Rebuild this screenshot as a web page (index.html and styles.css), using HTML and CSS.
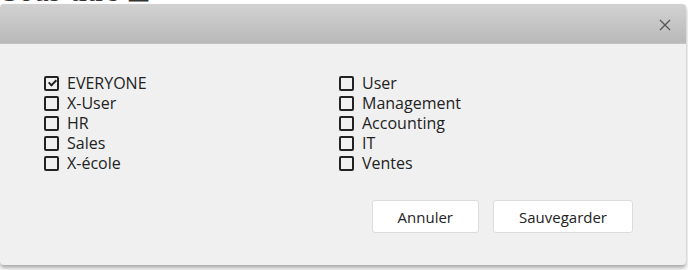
FILE: index.html
```html
<!DOCTYPE html>
<html lang="fr">
<head>
    <meta charset="UTF-8">
    <title>Groupes</title>
    <link rel="stylesheet" href="styles.css">
</head>
<body>
    <div class="page-title">Sous-titre &#x229E;</div>

    <div class="dialog">
        <div class="dialog-header">
            <button class="close-btn" aria-label="Fermer">
                <svg width="12" height="12" viewBox="0 0 12 12">
                    <path d="M1 1 L11 11 M11 1 L1 11" stroke="#555" stroke-width="1.3" fill="none"/>
                </svg>
            </button>
        </div>
        <div class="dialog-body">
            <div class="groups">
                <label class="group"><span class="box checked"></span>EVERYONE</label>
                <label class="group"><span class="box"></span>User</label>
                <label class="group"><span class="box"></span>X-User</label>
                <label class="group"><span class="box"></span>Management</label>
                <label class="group"><span class="box"></span>HR</label>
                <label class="group"><span class="box"></span>Accounting</label>
                <label class="group"><span class="box"></span>Sales</label>
                <label class="group"><span class="box"></span>IT</label>
                <label class="group"><span class="box"></span>X-école</label>
                <label class="group"><span class="box"></span>Ventes</label>
            </div>
            <div class="actions">
                <button class="btn">Annuler</button>
                <button class="btn">Sauvegarder</button>
            </div>
        </div>
    </div>
</body>
</html>
```

FILE: styles.css
```css
body {
    margin: 0;
    background: #fff;
    font-family: "Open Sans", sans-serif;
    overflow: hidden;
}

.page-title {
    font-family: "Liberation Serif", serif;
    font-size: 30px;
    font-weight: normal;
    line-height: 30px;
    margin-top: -24px;
    padding-left: 2px;
    color: #333;
}

/* Fenetre modale */
.dialog {
    position: absolute;
    left: 0;
    top: 4px;
    width: 686px;
    height: 261px;
    background: #f0f0f0;
    border-radius: 4px;
    box-shadow: 0 3px 4px rgba(0, 0, 0, 0.35);
    overflow: hidden;
}
.dialog-header {
    height: 39px;
    background: linear-gradient(#d2d2d2, #b9b9b9);
    border-bottom: 1px solid #c4c4c4;
    display: flex;
    justify-content: flex-end;
    align-items: center;
}
.close-btn {
    border: none;
    background: none;
    padding: 0;
    margin-right: 15px;
    margin-top: 2px;
    width: 12px;
    height: 12px;
    cursor: pointer;
    display: flex;
}

.dialog-body {
    padding: 29px 53px 0 44px;
}
.groups {
    display: grid;
    grid-template-columns: 295px 1fr;
}
.group {
    display: flex;
    align-items: center;
    height: 20px;
    font-size: 16px;
    color: #222;
}
.box {
    box-sizing: border-box;
    width: 15px;
    height: 15px;
    border: 2px solid #222;
    border-radius: 2px;
    margin-right: 8px;
    position: relative;
    flex-shrink: 0;
}
.box.checked::after {
    content: "";
    position: absolute;
    left: 3.5px;
    top: 0.5px;
    width: 3px;
    height: 6px;
    border-right: 2px solid #222;
    border-bottom: 2px solid #222;
    transform: rotate(45deg);
}

.actions {
    display: flex;
    justify-content: flex-end;
    gap: 14px;
    margin-top: 27px;
}
.btn {
    font-family: "Open Sans", sans-serif;
    font-size: 15px;
    color: #222;
    background: #fff;
    border: 1px solid #dcdcdc;
    border-radius: 3px;
    height: 33px;
    padding: 0 25px;
    cursor: pointer;
}
```
